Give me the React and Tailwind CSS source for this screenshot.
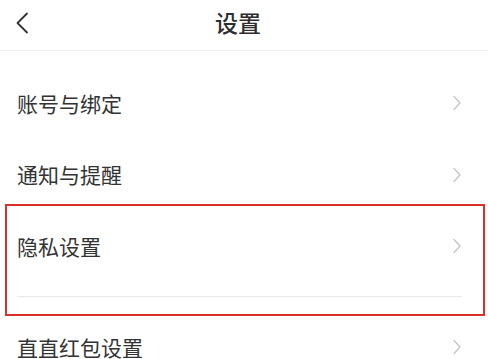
import React from "react";

const Chevron = () => (
  <svg width="10" height="16" viewBox="0 0 10 16" className="shrink-0">
    <path d="M2 1.5 L8 8 L2 14.5" fill="none" stroke="#c4c4c4" strokeWidth="1.3" strokeLinecap="round" strokeLinejoin="round" />
  </svg>
);

const Row = ({ label, h }) => (
  <div className={`flex items-center justify-between pl-[17px] pr-[26px] ${h}`}>
    <span className="text-[21px] leading-none text-[#333333]">{label}</span>
    <Chevron />
  </div>
);

export default function App() {
  return (
    <div
      className="relative w-[488px] h-[359px] overflow-hidden bg-white"
      style={{ fontFamily: '"Noto Sans CJK SC", "Noto Sans", sans-serif' }}
    >
      <div className="relative flex h-[51px] items-center justify-center border-b border-[#f0f0f0]">
        <svg width="14" height="22" viewBox="0 0 14 22" className="absolute left-[15px] top-[12px]">
          <path d="M12 1.5 L2.5 11 L12 20.5" fill="none" stroke="#333333" strokeWidth="1.8" strokeLinecap="round" strokeLinejoin="round" />
        </svg>
        <span className="text-[23px] font-medium leading-none text-[#2e2e2e] -mt-[5px] -ml-[12px]">设置</span>
      </div>
      <div className="pt-[16px]">
        <Row label="账号与绑定" h="h-[72px]" />
        <Row label="通知与提醒" h="h-[71px]" />
        <Row label="隐私设置" h="h-[72px]" />
        <div className="mt-[14px] ml-[17px] mr-[26px] h-px bg-[#e8e8e8]" />
        <Row label="直直红包设置" h="h-[100px]" />
      </div>
      <div className="absolute left-[5px] top-[204px] h-[112px] w-[480px] border-2 border-[#d8302d]" />
    </div>
  );
}
